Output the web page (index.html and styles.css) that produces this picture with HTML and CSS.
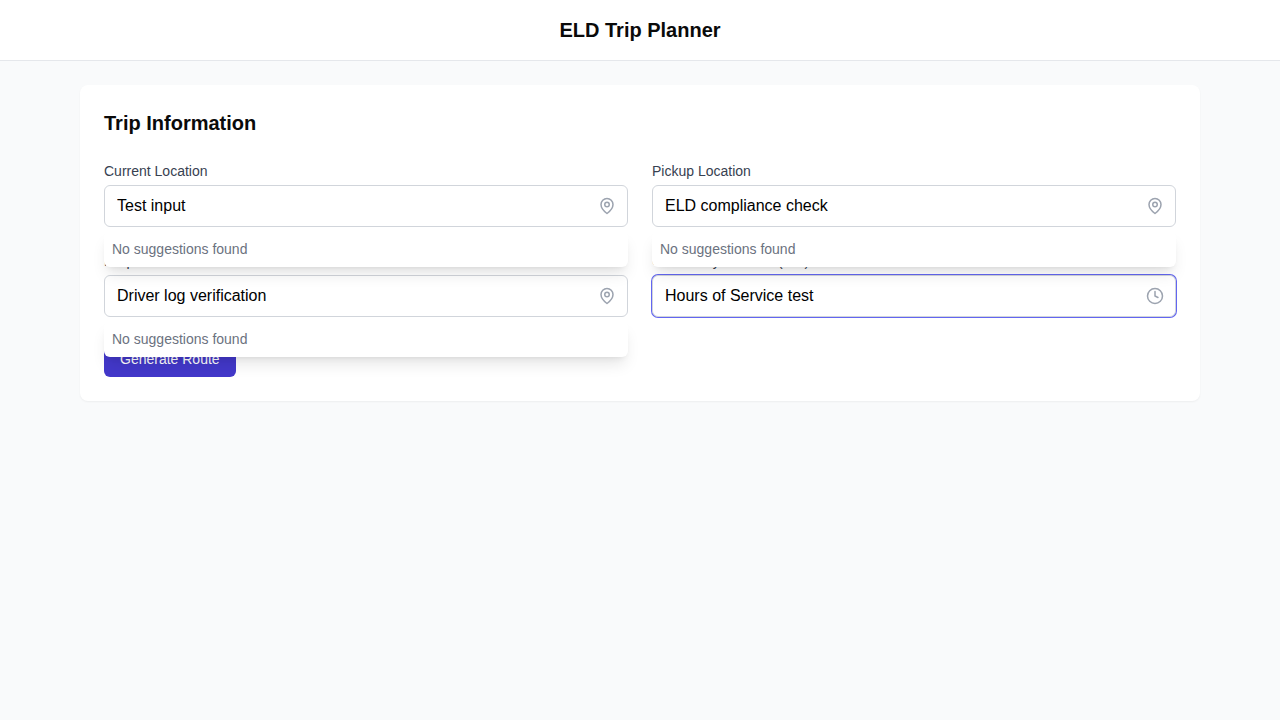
FILE: index.html
```html
<!DOCTYPE html>
<html lang="en">
<head>
<meta charset="utf-8">
<title>ELD Trip Planner</title>
<link rel="stylesheet" href="styles.css">
</head>
<body>
<header class="header"><h1 class="title">ELD Trip Planner</h1></header>
<main class="main">
  <section class="card">
    <h2 class="title card-title">Trip Information</h2>
    <form class="form">
      <div class="grid">
        <div class="field">
          <label class="label" for="current">Current Location</label>
          <div class="control">
            <input class="input" id="current" type="text" value="Test input">
            <svg class="icon" viewBox="0 0 24 24"><path d="M20 10c0 6-8 12-8 12s-8-6-8-12a8 8 0 0 1 16 0Z"/><circle cx="12" cy="10" r="3"/></svg>
          </div>
          <div class="suggestions">No suggestions found</div>
        </div>
        <div class="field">
          <label class="label" for="pickup">Pickup Location</label>
          <div class="control">
            <input class="input" id="pickup" type="text" value="ELD compliance check">
            <svg class="icon" viewBox="0 0 24 24"><path d="M20 10c0 6-8 12-8 12s-8-6-8-12a8 8 0 0 1 16 0Z"/><circle cx="12" cy="10" r="3"/></svg>
          </div>
          <div class="suggestions">No suggestions found</div>
        </div>
        <div class="field">
          <label class="label" for="dropoff">Dropoff Location</label>
          <div class="control">
            <input class="input" id="dropoff" type="text" value="Driver log verification">
            <svg class="icon" viewBox="0 0 24 24"><path d="M20 10c0 6-8 12-8 12s-8-6-8-12a8 8 0 0 1 16 0Z"/><circle cx="12" cy="10" r="3"/></svg>
          </div>
          <div class="suggestions">No suggestions found</div>
        </div>
        <div class="field">
          <label class="label" for="cycle">Current Cycle Used (Hrs)</label>
          <div class="control">
            <input class="input input-active" id="cycle" type="text" value="Hours of Service test">
            <svg class="icon" viewBox="0 0 24 24"><circle cx="12" cy="12" r="10"/><path d="M12 6v6l4 2"/></svg>
          </div>
        </div>
      </div>
      <button class="button" type="button">Generate Route</button>
    </form>
  </section>
</main>
</body>
</html>
```

FILE: styles.css
```css
* { box-sizing: border-box; }
body {
  margin: 0;
  min-height: 100vh;
  background: #f9fafb;
  color: #0a0a0a;
  font-family: "Liberation Sans", Arial, sans-serif;
  font-size: 16px;
  line-height: 24px;
}
.header {
  padding: 16px;
  background: #fff;
  border-bottom: 1px solid #e5e7eb;
  text-align: center;
}
.title {
  margin: 0;
  font-size: 20px;
  line-height: 28px;
  font-weight: 600;
}
.main {
  max-width: 1120px;
  margin: 0 auto;
  padding-top: 24px;
}
.card {
  padding: 24px;
  background: #fff;
  border-radius: 8px;
  box-shadow: 0 1px 2px rgba(0, 0, 0, 0.05);
}
.card-title { margin-bottom: 24px; }
.form {
  display: flex;
  flex-direction: column;
  align-items: flex-start;
  gap: 24px;
}
.grid {
  display: grid;
  grid-template-columns: 1fr 1fr;
  gap: 24px;
  width: 100%;
}
.field { position: relative; }
.label {
  display: block;
  margin-bottom: 4px;
  color: #374151;
  font-size: 14px;
  line-height: 20px;
}
.control { position: relative; }
.input {
  display: block;
  width: 100%;
  height: 42px;
  padding: 8px 40px 8px 12px;
  border: 1px solid #d1d5db;
  border-radius: 6px;
  background: #fff;
  color: #000;
  font: inherit;
  outline: none;
}
.input-active { box-shadow: 0 0 0 1px #6366f1; }
.icon {
  position: absolute;
  top: 12px;
  right: 12px;
  width: 18px;
  height: 18px;
  fill: none;
  stroke: #9ca3af;
  stroke-width: 2;
  stroke-linecap: round;
  stroke-linejoin: round;
}
.suggestions {
  position: absolute;
  top: calc(100% + 4px);
  left: 0;
  right: 0;
  z-index: 10;
  padding: 8px;
  border-radius: 6px;
  background: #fff;
  color: #6b7280;
  font-size: 14px;
  line-height: 20px;
  box-shadow: 0 10px 15px -3px rgba(0, 0, 0, 0.1), 0 4px 6px -4px rgba(0, 0, 0, 0.1);
}
.button {
  padding: 8px 16px;
  border: 0;
  border-radius: 6px;
  background: #4338ca;
  color: #fff;
  font: 500 14px/20px "Liberation Sans", Arial, sans-serif;
}
```
